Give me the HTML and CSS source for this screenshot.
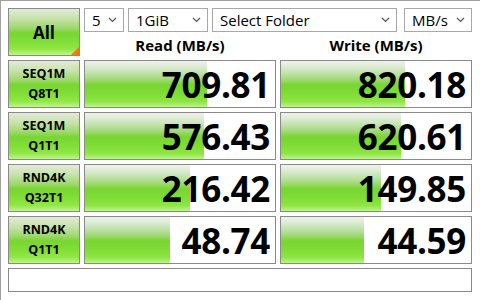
FILE: index.html
```html
<!DOCTYPE html>
<html>
<head>
<meta charset="utf-8">
<link rel="stylesheet" href="styles.css">
</head>
<body>
<div class="win">
  <div class="grid">
    <div class="btn all">All<span class="corner"></span></div>
    <div class="top">
      <div class="combos">
        <div class="combo c1"><span>5</span><svg class="chev" width="9" height="6" viewBox="0 0 9 6"><path d="M1 1 L4.5 4.5 L8 1" fill="none" stroke="#555" stroke-width="1.2"/></svg></div>
        <div class="combo c2"><span>1GiB</span><svg class="chev" width="9" height="6" viewBox="0 0 9 6"><path d="M1 1 L4.5 4.5 L8 1" fill="none" stroke="#555" stroke-width="1.2"/></svg></div>
        <div class="combo c3"><span>Select Folder</span><svg class="chev" width="9" height="6" viewBox="0 0 9 6"><path d="M1 1 L4.5 4.5 L8 1" fill="none" stroke="#555" stroke-width="1.2"/></svg></div>
        <div class="combo c4"><span>MB/s</span><svg class="chev" width="9" height="6" viewBox="0 0 9 6"><path d="M1 1 L4.5 4.5 L8 1" fill="none" stroke="#555" stroke-width="1.2"/></svg></div>
      </div>
      <div class="heads">
        <div class="head">Read (MB/s)</div>
        <div class="head">Write (MB/s)</div>
      </div>
    </div>

    <div class="btn lbl">SEQ1M<br>Q8T1</div>
    <div class="val" style="--fill:122px">709.81</div>
    <div class="val" style="--fill:124px">820.18</div>

    <div class="btn lbl">SEQ1M<br>Q1T1</div>
    <div class="val" style="--fill:119px">576.43</div>
    <div class="val" style="--fill:120px">620.61</div>

    <div class="btn lbl">RND4K<br>Q32T1</div>
    <div class="val" style="--fill:105px">216.42</div>
    <div class="val" style="--fill:100px">149.85</div>

    <div class="btn lbl">RND4K<br>Q1T1</div>
    <div class="val" style="--fill:85px">48.74</div>
    <div class="val" style="--fill:83px">44.59</div>

    <div class="status"></div>
  </div>
</div>
</body>
</html>
```
FILE: styles.css
```css
html, body {
  margin: 0;
  padding: 0;
  background: #ffffff;
}
body {
  width: 480px;
  height: 300px;
  overflow: hidden;
  font-family: "Open Sans", "Noto Sans", sans-serif;
}
.win {
  width: 480px;
  height: 300px;
  box-sizing: border-box;
  border-left: 1px solid #a0a0a0;
  border-top: 1px solid #a0a0a0;
  padding: 7px 0 0 7px;
}
.grid {
  display: grid;
  grid-template-columns: 72px 192px 192px;
  grid-template-rows: 48px 48px 48px 48px 48px 24px;
  gap: 4px;
}
.btn {
  box-sizing: border-box;
  border: 1px solid #8a8a8a;
  background: linear-gradient(to bottom, #e4ead8 0%, #c6e2a8 22%, #9bd86a 42%, #78d630 52%, #82de38 72%, #92e844 88%, #c4f29a 100%);
  display: flex;
  align-items: center;
  justify-content: center;
  text-align: center;
  font-weight: 700;
  color: #000;
  position: relative;
}
.all {
  font-size: 17px;
}
.corner {
  position: absolute;
  right: 0;
  bottom: 0;
  width: 0;
  height: 0;
  border-left: 8px solid transparent;
  border-bottom: 8px solid #f07818;
}
.lbl {
  font-size: 12.5px;
  line-height: 20px;
}
.top {
  grid-column: 2 / 4;
  display: flex;
  flex-direction: column;
}
.combos {
  display: flex;
  height: 24px;
}
.combo {
  box-sizing: border-box;
  height: 24px;
  border: 1px solid #a8a8a8;
  background: #fff;
  display: flex;
  align-items: center;
  justify-content: space-between;
  padding: 0 6px 0 7px;
  font-size: 15px;
  color: #000;
  margin-right: 4px;
}
.combo span {
  line-height: 22px;
}
.c1 { width: 40px; }
.c2 { width: 80px; }
.c3 { width: 185px; margin-right: 7px; }
.c4 { width: 68px; margin-right: 0; }
.heads {
  display: grid;
  grid-template-columns: 192px 192px;
  gap: 4px;
  flex: 1;
}
.head {
  text-align: center;
  font-weight: 700;
  font-size: 15px;
  line-height: 22px;
  padding-top: 2px;
}
.val {
  box-sizing: border-box;
  border: 1px solid #8a8a8a;
  background-color: #fff;
  background-image: linear-gradient(to bottom, #f0f2ee 0%, #d2e8c4 18%, #a6da80 38%, #78d630 52%, #80dc36 72%, #8ee642 88%, #bff294 100%);
  background-repeat: no-repeat;
  background-size: var(--fill) 100%;
  display: flex;
  align-items: center;
  justify-content: flex-end;
  padding-right: 5px;
  font-weight: 700;
  font-size: 35px;
  color: #000;
  letter-spacing: -0.3px;
}
.status {
  grid-column: 1 / 4;
  box-sizing: border-box;
  border: 1px solid #8a8a8a;
  background: #fff;
}
```
